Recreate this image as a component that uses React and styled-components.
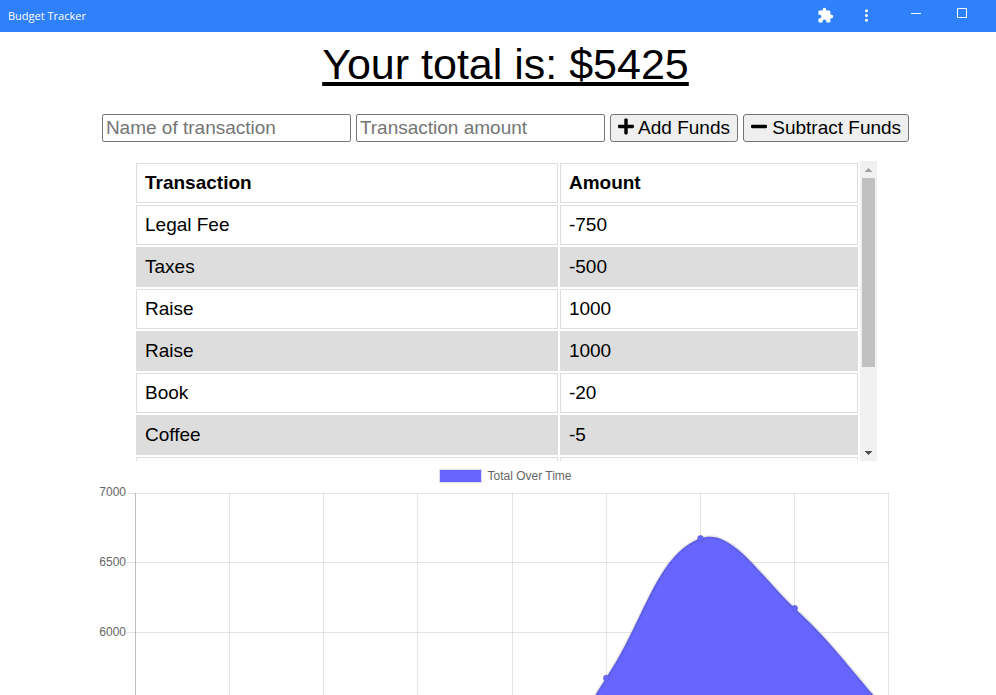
import React from "react";
import styled, { createGlobalStyle } from "styled-components";
import { FaPlus, FaMinus } from "react-icons/fa";
import { MdExtension, MdMoreVert } from "react-icons/md";

const GlobalStyle = createGlobalStyle`
  *, *::before, *::after { box-sizing: border-box; }
  body {
    margin: 0;
    background: #fff;
    color: #000;
    font-family: "Liberation Sans", Arial, Helvetica, sans-serif;
    font-size: 19px;
    line-height: 22px;
  }
`;

const Window = styled.div`
  display: flex;
  flex-direction: column;
  height: 100vh;
  overflow: hidden;
`;

const TitleBar = styled.header`
  display: flex;
  flex: none;
  align-items: center;
  justify-content: space-between;
  height: 32px;
  padding: 0 14px 0 8px;
  background: #2f80fb;
  color: #fff;
`;

const AppName = styled.span`
  font-family: "Open Sans", "Noto Sans", sans-serif;
  font-size: 11px;
  line-height: 16px;
`;

const WindowControls = styled.div`
  display: flex;
`;

const ControlButton = styled.button`
  display: flex;
  align-items: center;
  justify-content: center;
  width: ${(p) => p.$width}px;
  height: 32px;
  padding: ${(p) => (p.$raised ? "0 0 6px" : "0 0 2px")};
  border: 0;
  background: none;
  color: inherit;
`;

const Page = styled.main`
  flex: 1;
  min-height: 0;
  overflow: hidden;
  padding: 7px 81px 0 96px;
`;

const Total = styled.h1`
  margin: 0;
  font-size: 43px;
  font-weight: 400;
  line-height: 50px;
  text-align: center;
  text-decoration: underline;
`;

const Form = styled.form`
  display: flex;
  justify-content: center;
  gap: 5px;
  margin: 25px 0 19px;
`;

const Field = styled.input`
  width: 249px;
  min-width: 0;
  height: 28px;
  padding: 1px 3px;
  border: 1px solid #767676;
  border-radius: 2px;
  background: #fff;
  font: inherit;

  &::placeholder {
    color: #757575;
    opacity: 1;
  }
`;

const FormButton = styled.button`
  flex: none;
  height: 28px;
  padding: 0 7px;
  border: 1px solid #767676;
  border-radius: 3px;
  background: #efefef;
  color: #000;
  font: inherit;
  white-space: nowrap;

  svg {
    width: 16px;
    height: 19px;
    vertical-align: -2px;
  }
`;

const ScrollPanel = styled.section`
  display: flex;
  height: 300px;
  margin: 0 38px;
`;

const ScrollContent = styled.div`
  flex: 1;
  min-width: 0;
  overflow: hidden;
`;

const Table = styled.table`
  width: 100%;
  border-spacing: 2px;
  table-layout: fixed;
  text-align: left;
`;

const HeadCell = styled.th`
  width: ${(p) => p.$width};
  padding: 8px;
  border: 1px solid #ddd;
`;

const Row = styled.tr`
  &:nth-child(even) {
    background: #ddd;
  }
`;

const Cell = styled.td`
  padding: 8px;
  border: 1px solid #ddd;
`;

const ScrollBar = styled.div`
  display: flex;
  flex: none;
  flex-direction: column;
  width: 17px;
  background: #f1f1f1;
`;

const ArrowBox = styled.div`
  display: flex;
  flex: none;
  align-items: center;
  justify-content: center;
  height: 17px;
  color: ${(p) => (p.$active ? "#505050" : "#a3a3a3")};
`;

const Track = styled.div`
  flex: 1;
  padding: 0 2px;
`;

const Thumb = styled.div`
  height: 71%;
  background: #c1c1c1;
`;

const ChartFigure = styled.figure`
  margin: 0;
  padding-top: 8px;
`;

const Legend = styled.figcaption`
  display: flex;
  align-items: center;
  justify-content: center;
  gap: 5px;
  color: #666;
  font-size: 12px;
  line-height: 14px;
`;

const Swatch = styled.span`
  width: 43px;
  height: 14px;
  border: 1px solid #dcdcec;
  background: #66f;
`;

const Plot = styled.svg`
  display: block;
  width: 100%;
  height: auto;

  text {
    fill: #666;
    font-size: 12px;
  }
`;

const transactions = [
  { name: "Legal Fee", amount: -750 },
  { name: "Taxes", amount: -500 },
  { name: "Raise", amount: 1000 },
  { name: "Raise", amount: 1000 },
  { name: "Book", amount: -20 },
  { name: "Coffee", amount: -5 },
  { name: "Rent", amount: -300 },
];

const totals = [4500, 5000, 4700, 4695, 4675, 5675, 6675, 6175, 5425];
const ticks = [7000, 6500, 6000, 5500, 5000, 4500];

const plot = { left: 39, right: 793, top: 10, unit: 0.1396, width: 819, height: 380 };
const toX = (i) => plot.left + ((plot.right - plot.left) * i) / (totals.length - 1);
const toY = (value) => plot.top + (7000 - value) * plot.unit;
const crisp = (n) => Math.floor(n) + 0.5;

const points = totals.map((value, i) => ({ x: toX(i), y: toY(value) }));

// Control points before and after each point of a spline with the given tension.
const controls = points.map((p, i) => {
  const prev = points[i - 1] || p;
  const next = points[i + 1] || p;
  const d1 = Math.hypot(p.x - prev.x, p.y - prev.y);
  const d2 = Math.hypot(next.x - p.x, next.y - p.y);
  const tension = 0.4;
  const before = (tension * d1) / (d1 + d2);
  const after = (tension * d2) / (d1 + d2);
  const dx = next.x - prev.x;
  const dy = next.y - prev.y;
  return {
    before: `${p.x - before * dx} ${p.y - before * dy}`,
    after: `${p.x + after * dx} ${p.y + after * dy}`,
  };
});

const curve = points
  .map((p, i) =>
    i === 0
      ? `M${p.x} ${p.y}`
      : `C${controls[i - 1].after} ${controls[i].before} ${p.x} ${p.y}`
  )
  .join(" ");
const area = `${curve} V${plot.height} H${plot.left} Z`;

function TotalChart() {
  return (
    <ChartFigure>
      <Legend>
        <Swatch />
        Total Over Time
      </Legend>
      <Plot viewBox={`0 0 ${plot.width} ${plot.height}`} role="img" aria-label="Total Over Time">
        {ticks.map((value) => (
          <g key={value}>
            <path
              d={`M${plot.left - 9} ${crisp(toY(value))}H${plot.right}`}
              stroke="#000"
              strokeOpacity="0.1"
            />
            <text x={plot.left - 9} y={Math.round(toY(value)) + 3} textAnchor="end">
              {value}
            </text>
          </g>
        ))}
        {points.map((p, i) => (
          <path
            key={i}
            d={`M${Math.min(crisp(p.x), plot.right - 0.5)} ${plot.top}V${plot.height}`}
            stroke="#000"
            strokeOpacity={i === 0 ? 0.25 : 0.1}
          />
        ))}
        <path d={area} fill="#66f" />
        <path d={curve} fill="none" stroke="#000" strokeOpacity="0.1" strokeWidth="3" />
        {points.map((p, i) => (
          <circle key={i} cx={p.x} cy={p.y} r="3" fill="#66f" stroke="#000" strokeOpacity="0.1" />
        ))}
      </Plot>
    </ChartFigure>
  );
}

export default function App() {
  return (
    <>
      <GlobalStyle />
      <Window>
        <TitleBar>
          <AppName>Budget Tracker</AppName>
          <WindowControls>
            <ControlButton $width={36} type="button" aria-label="Extensions">
              <MdExtension size={17} />
            </ControlButton>
            <ControlButton $width={46} type="button" aria-label="Menu">
              <MdMoreVert size={19} />
            </ControlButton>
            <ControlButton $width={53} $raised type="button" aria-label="Minimize">
              <svg width="10" height="10" viewBox="0 0 10 10" stroke="currentColor">
                <path d="M0 5.5H10" />
              </svg>
            </ControlButton>
            <ControlButton $width={40} $raised type="button" aria-label="Maximize">
              <svg width="10" height="10" viewBox="0 0 10 10" fill="none" stroke="currentColor">
                <path d="M.5 .5H9.5V9.5H.5Z" />
              </svg>
            </ControlButton>
          </WindowControls>
        </TitleBar>
        <Page>
          <Total>Your total is: $5425</Total>
          <Form onSubmit={(e) => e.preventDefault()}>
            <Field type="text" placeholder="Name of transaction" aria-label="Name of transaction" />
            <Field type="number" placeholder="Transaction amount" aria-label="Transaction amount" />
            <FormButton type="button">
              <FaPlus /> Add Funds
            </FormButton>
            <FormButton type="button">
              <FaMinus /> Subtract Funds
            </FormButton>
          </Form>
          <ScrollPanel>
            <ScrollContent>
              <Table>
                <thead>
                  <tr>
                    <HeadCell $width="auto">Transaction</HeadCell>
                    <HeadCell $width="41.4%">Amount</HeadCell>
                  </tr>
                </thead>
                <tbody>
                  {transactions.map((t, i) => (
                    <Row key={i}>
                      <Cell>{t.name}</Cell>
                      <Cell>{t.amount}</Cell>
                    </Row>
                  ))}
                </tbody>
              </Table>
            </ScrollContent>
            <ScrollBar aria-hidden="true">
              <ArrowBox>
                <svg width="7" height="4" viewBox="0 0 7 4" fill="currentColor">
                  <path d="M3 0H4V1H5V2H6V3H7V4H0V3H1V2H2V1H3Z" />
                </svg>
              </ArrowBox>
              <Track>
                <Thumb />
              </Track>
              <ArrowBox $active>
                <svg width="7" height="4" viewBox="0 0 7 4" fill="currentColor">
                  <path d="M0 0H7V1H6V2H5V3H4V4H3V3H2V2H1V1H0Z" />
                </svg>
              </ArrowBox>
            </ScrollBar>
          </ScrollPanel>
          <TotalChart />
        </Page>
      </Window>
    </>
  );
}
